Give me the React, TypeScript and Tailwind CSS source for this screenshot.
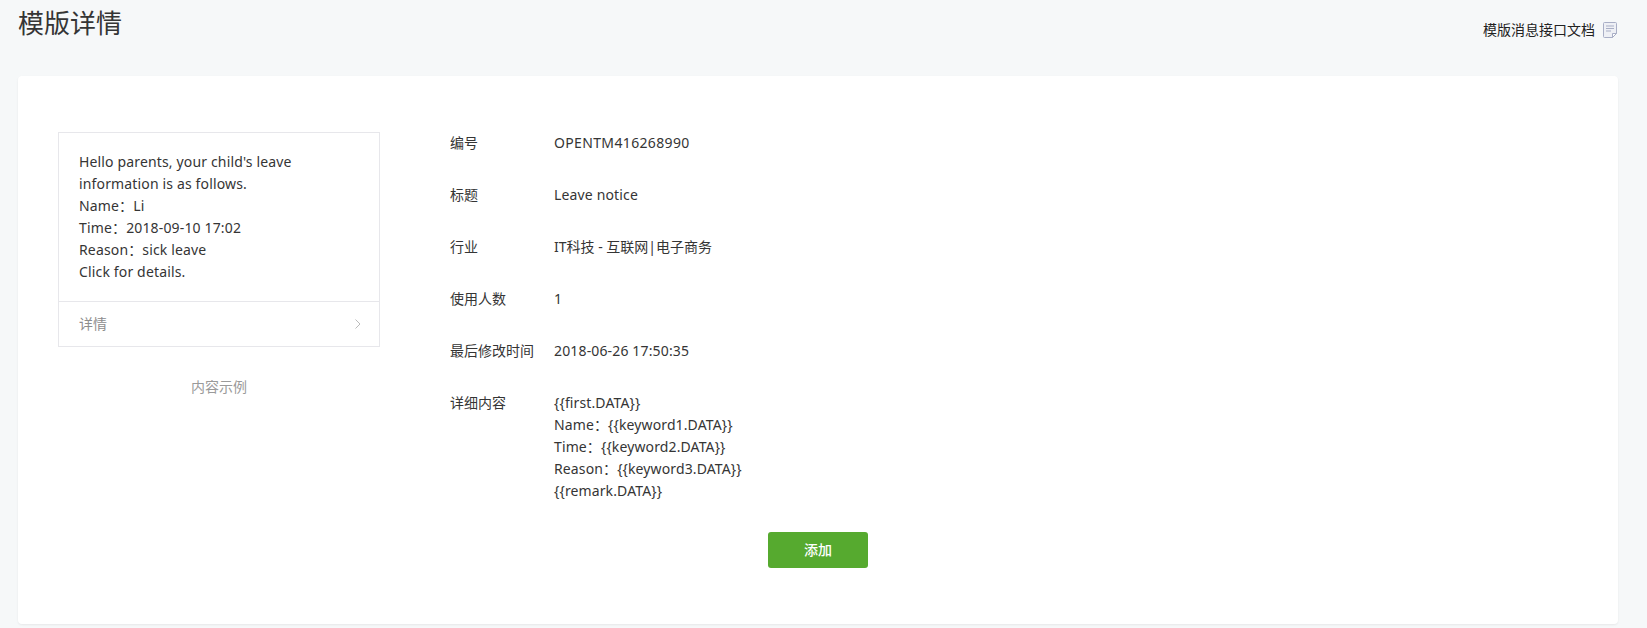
const font = '"Noto Sans", "Noto Sans CJK SC", sans-serif';

const rows: [string, string, string][] = [
  ["编号", "OPENTM416268990", "tracking-[0.35px]"],
  ["标题", "Leave notice", "tracking-[0.15px]"],
  ["行业", "IT科技 - 互联网|电子商务", ""],
  ["使用人数", "1", ""],
  ["最后修改时间", "2018-06-26 17:50:35", "tracking-[0.15px]"],
];

export default function App() {
  return (
    <div className="h-[628px] overflow-hidden bg-[#f6f8f9] pl-[18px] pr-[29px] text-[14px] leading-[22px] text-[#353535]" style={{ fontFamily: font }}>
      <div className="flex h-[76px] items-start justify-between">
        <h1 className="text-[26px] leading-[36px] pt-[5px] font-normal text-[#353535]">模版详情</h1>
        <div className="mt-[19px] mr-[1px] flex items-center gap-[8px] text-[#222]">
          <span className="text-[14px]">模版消息接口文档</span>
          <svg width="14" height="16" viewBox="0 0 14 16" fill="none">
            <path d="M.5 1.5a1 1 0 0 1 1-1h11a1 1 0 0 1 1 1v10l-4 4h-8a1 1 0 0 1-1-1z" fill="#eef0f5" stroke="#a9afc6" />
            <path d="M3 4h8M3 6.5h8M3 9h5" stroke="#a9afc6" />
            <path d="M13.5 11.5h-4v4z" stroke="#a9afc6" fill="#fff" />
          </svg>
        </div>
      </div>
      <div className="flex h-[548px] rounded-[4px] bg-white pl-[40px] pt-[56px] shadow-[0_1px_2px_rgba(150,150,150,0.15)]">
        <div className="w-[322px] shrink-0">
          <div className="border border-[#e7e7eb]">
            <div className="px-[20px] pt-[18px] pb-[18px] tracking-[0.15px]">
              <p>Hello parents, your child's leave</p>
              <p>information is as follows.</p>
              <p>Name：Li</p>
              <p>Time：2018-09-10 17:02</p>
              <p>Reason：sick leave</p>
              <p>Click for details.</p>
            </div>
            <div className="flex h-[45px] items-center justify-between border-t border-[#e7e7eb] pl-[20px] pr-[18px] text-[#8d8d8d]">
              <span>详情</span>
              <svg width="6" height="10" viewBox="0 0 6 10" fill="none">
                <path d="M.5.5 5 5 .5 9.5" stroke="#bbb" />
              </svg>
            </div>
          </div>
          <p className="mt-[29px] text-center text-[#9a9a9a]">内容示例</p>
        </div>
        <div className="ml-[70px] flex-1">
          {rows.map(([label, value, cls]) => (
            <div key={label} className="mb-[30px] flex">
              <div className="w-[104px] shrink-0">{label}</div>
              <div className={cls}>{value}</div>
            </div>
          ))}
          <div className="flex">
            <div className="w-[104px] shrink-0">详细内容</div>
            <div className="tracking-[0.12px]">
              <p>{"{{first.DATA}}"}</p>
              <p>{"Name：{{keyword1.DATA}}"}</p>
              <p>{"Time：{{keyword2.DATA}}"}</p>
              <p>{"Reason：{{keyword3.DATA}}"}</p>
              <p>{"{{remark.DATA}}"}</p>
            </div>
          </div>
          <button className="ml-[318px] mt-[30px] block h-[36px] w-[100px] rounded-[3px] bg-[#56aa2f] text-[14px] leading-[36px] font-medium text-white">添加</button>
        </div>
      </div>
    </div>
  );
}
